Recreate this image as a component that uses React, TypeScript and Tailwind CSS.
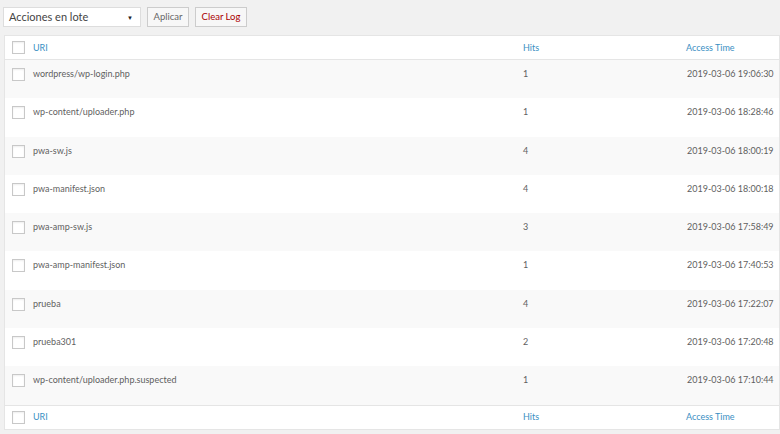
import React from "react";

const rows = [
  { uri: "wordpress/wp-login.php", hits: 1, time: "2019-03-06 19:06:30" },
  { uri: "wp-content/uploader.php", hits: 1, time: "2019-03-06 18:28:46" },
  { uri: "pwa-sw.js", hits: 4, time: "2019-03-06 18:00:19" },
  { uri: "pwa-manifest.json", hits: 4, time: "2019-03-06 18:00:18" },
  { uri: "pwa-amp-sw.js", hits: 3, time: "2019-03-06 17:58:49" },
  { uri: "pwa-amp-manifest.json", hits: 1, time: "2019-03-06 17:40:53" },
  { uri: "prueba", hits: 4, time: "2019-03-06 17:22:07" },
  { uri: "prueba301", hits: 2, time: "2019-03-06 17:20:48" },
  { uri: "wp-content/uploader.php.suspected", hits: 1, time: "2019-03-06 17:10:44" },
];

const Check = () => (
  <span className="block w-[13px] h-[13px] border border-[#c8c8c8] bg-white shadow-[inset_0_1px_2px_rgba(0,0,0,0.07)]" />
);

function HeadRow({ top }: { top?: boolean }) {
  return (
    <div
      className={`flex items-center h-[24px] bg-white text-[#3a8fc3] ${
        top ? "border-b border-[#e5e5e5]" : "border-t border-[#e5e5e5]"
      }`}
    >
      <div className="w-[28px] shrink-0 pl-[7px]">
        <Check />
      </div>
      <div className="w-[490px] shrink-0">URI</div>
      <div className="w-[163px] shrink-0">Hits</div>
      <div className="flex-1 whitespace-nowrap">Access Time</div>
    </div>
  );
}

export default function App() {
  return (
    <div
      className="w-[780px] h-[434px] bg-[#f1f1f1] overflow-hidden text-[9px]"
      style={{ fontFamily: 'Lato, "Open Sans", sans-serif' }}
    >
      <div className="flex items-center gap-[6px] h-[35px] pl-[3px] pb-[1px]">
        <div className="flex items-center justify-between w-[138px] h-[20px] bg-white border border-[#ddd] pl-[5px] pr-[7px] text-[#444] text-[11px]">
          <span>Acciones en lote</span>
          <span className="text-[6px] text-[#222]">▼</span>
        </div>
        <button className="h-[20px] w-[42px] bg-[#f7f7f7] border border-[#ccc] text-[#666] text-[9.5px]">
          Aplicar
        </button>
        <button className="h-[20px] w-[52px] bg-[#f7f7f7] border border-[#ccc] text-[#a00] text-[9.5px]">
          Clear Log
        </button>
      </div>
      <div className="ml-[4px] border border-[#e5e5e5] bg-white">
        <HeadRow top />
        {rows.map((r, i) => (
          <div
            key={r.uri}
            className={`flex h-[38.3px] pt-[8px] text-[#5f5f5f] ${i % 2 === 0 ? "bg-[#f9f9f9]" : "bg-white"}`}
          >
            <div className="w-[28px] shrink-0 pl-[7px]">
              <Check />
            </div>
            <div className="w-[490px] shrink-0 leading-[12px]">{r.uri}</div>
            <div className="w-[164px] shrink-0 leading-[12px]">{r.hits}</div>
            <div className="flex-1 whitespace-nowrap leading-[12px]">{r.time}</div>
          </div>
        ))}
        <HeadRow />
      </div>
    </div>
  );
}
